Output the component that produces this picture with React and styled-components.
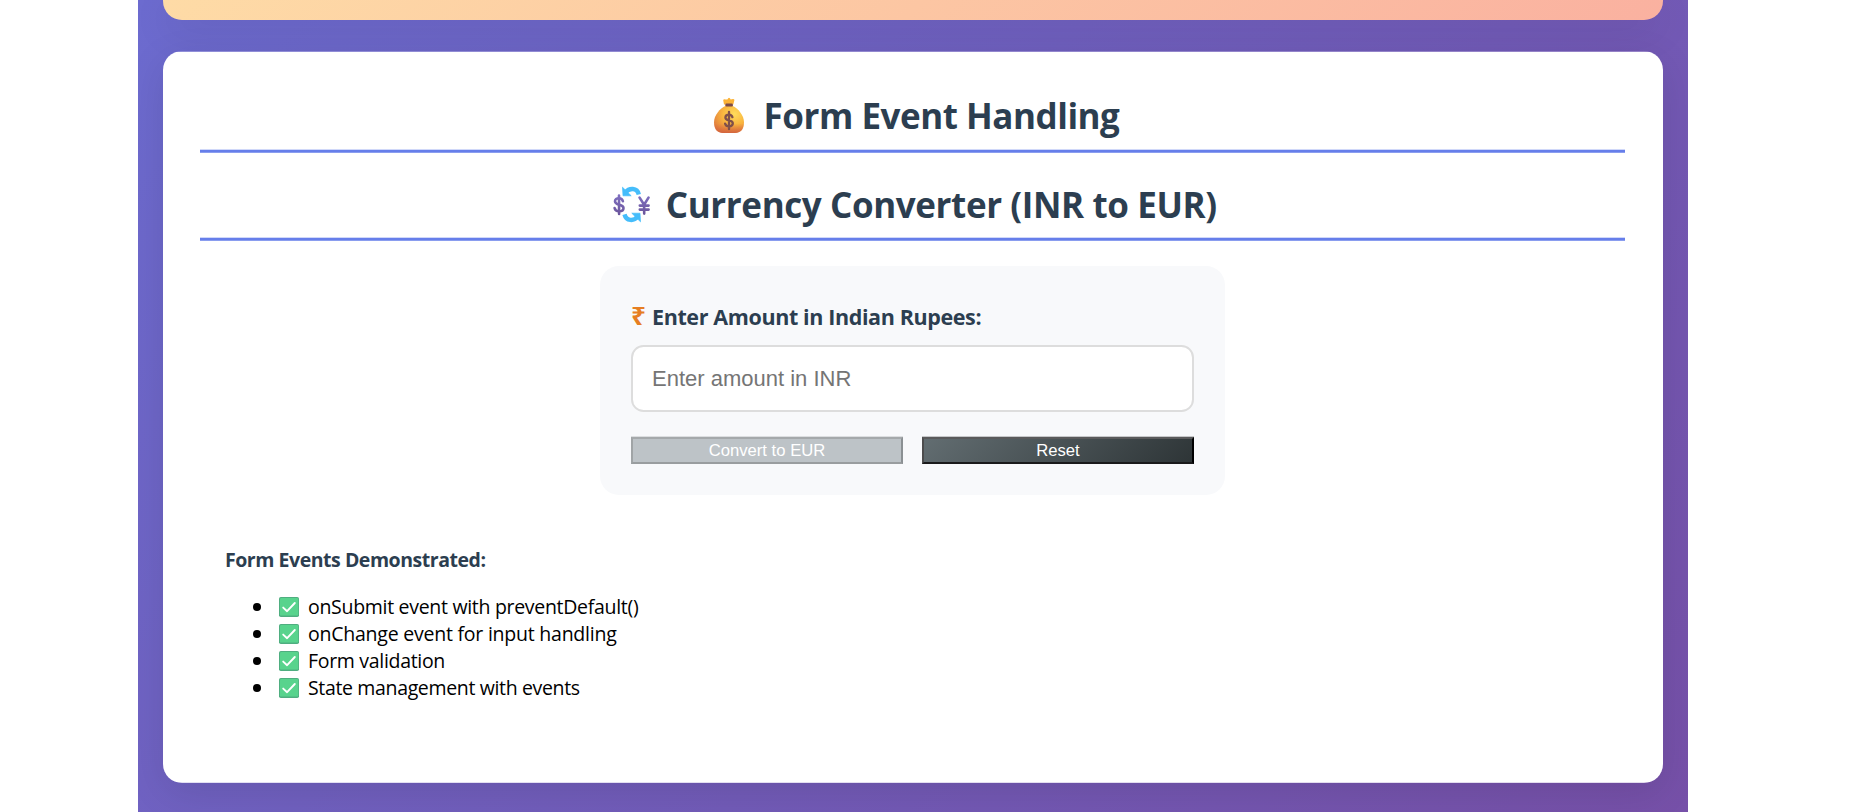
import React, { useState } from "react";
import styled, { createGlobalStyle } from "styled-components";

const GlobalStyle = createGlobalStyle`
  * { box-sizing: border-box; }
  body {
    margin: 0;
    background: #fff;
    overflow: hidden;
    font-family: "Open Sans", "Noto Sans", sans-serif;
  }
`;

const Page = styled.main`
  width: 1550px;
  height: 812px;
  margin-left: 138px;
  padding: 0 25px;
  overflow: hidden;
  display: flex;
  flex-direction: column;
  background: linear-gradient(135deg, #6c6bcf, #7650a8);
`;

const PreviousCard = styled.div`
  flex: none;
  height: 20px;
  border-radius: 0 0 19px 19px;
  background: linear-gradient(135deg, #fedba6, #fab1a0);
  box-shadow: 0 10px 38px rgba(0, 0, 0, 0.1);
`;

const Card = styled.section`
  flex: none;
  height: 732px;
  margin-top: 31px;
  padding: 37px 38px 0 37px;
  border-radius: 19px;
  background: linear-gradient(
    rgba(255, 255, 255, 0.25) 0 1px,
    #fff 1px 731px,
    rgba(255, 255, 255, 0.8) 731px
  );
  box-shadow: 0 10px 38px rgba(0, 0, 0, 0.1);
`;

const Heading = styled.h2`
  height: ${(p) => p.$height}px;
  margin: 0 0 ${(p) => p.$gap}px;
  padding-left: ${(p) => p.$indent}px;
  display: flex;
  justify-content: center;
  align-items: flex-start;
  gap: ${(p) => p.$iconGap}px;
  color: #2c3e50;
  font-size: 35px;
  font-weight: 700;
  line-height: 55px;
  letter-spacing: ${(p) => p.$track}px;
  white-space: nowrap;
  background: linear-gradient(#d0d8f9 0 1px, #667eea 1px 3px, #8a9def 3px 4px)
    bottom / 100% 4px no-repeat;

  svg {
    flex: none;
    margin-top: 9px;
  }
`;

const Form = styled.form`
  width: 625px;
  height: 229px;
  margin: 0 auto 51px;
  padding: 31px 31px 0;
  border-radius: 19px;
  background: #f8f9fb;
`;

const Label = styled.label`
  display: flex;
  gap: 7px;
  height: 48px;
  padding: 5px 0 0;
  color: #2c3e50;
  font-size: 21.5px;
  font-weight: 700;
  line-height: 30px;
  letter-spacing: -0.38px;
  white-space: nowrap;
`;

const Rupee = styled.span`
  width: 14px;
  color: #e67e22;
  font-size: 26px;
  line-height: 26px;
`;

const AmountInput = styled.input`
  display: block;
  width: 100%;
  height: 67px;
  padding: 0 19px;
  border: 2px solid #ddd;
  border-radius: 12.5px;
  background: #fff;
  outline: none;
  font-family: "Liberation Sans", sans-serif;
  font-size: 22px;

  &::placeholder { color: #757575; }
`;

const Buttons = styled.div`
  display: flex;
  gap: 19px;
  margin-top: 25px;
`;

const Button = styled.button`
  flex: 1;
  height: 27px;
  padding: 0;
  border: 2px solid;
  border-color: ${(p) => p.$edge};
  border-radius: 0;
  color: #fff;
  background: ${(p) => p.$fill};
  background-origin: border-box;
  box-shadow: 0 -1px 0 ${(p) => p.$rim};
  font-family: "Liberation Sans", sans-serif;
  font-size: 16.67px;
  line-height: 23px;
`;

const Notes = styled.div`
  padding-left: 25px;
`;

const NotesTitle = styled.h4`
  margin: 0 0 20px;
  color: #2c3e50;
  font-size: 19.5px;
  line-height: 27px;
  letter-spacing: -0.46px;
`;

const List = styled.ul`
  margin: 0;
  padding: 0 0 0 28px;
  list-style: none;
`;

const Item = styled.li`
  display: flex;
  align-items: center;
  height: 27px;
  color: #000;
  font-size: 19.5px;
  line-height: 27px;
  letter-spacing: ${(p) => p.$track}px;

  &::before {
    content: "";
    width: 8px;
    height: 8px;
    margin-right: 18px;
    border-radius: 50%;
    background: #000;
  }

  svg { margin-right: 9px; }
`;

const MoneyBag = () => (
  <svg width="32" height="36" viewBox="0 0 32 36" aria-hidden="true">
    <defs>
      <radialGradient id="bag" cx="0.68" cy="0.3" r="0.8">
        <stop offset="0" stopColor="#ffdc5c" />
        <stop offset="0.5" stopColor="#f9b53f" />
        <stop offset="1" stopColor="#e07a3d" />
      </radialGradient>
      <linearGradient id="bagBase" x1="0" y1="0" x2="0" y2="1">
        <stop offset="0.65" stopColor="#dc6a3c" stopOpacity="0" />
        <stop offset="1" stopColor="#d0603e" stopOpacity="0.85" />
      </linearGradient>
    </defs>
    <path d="M11 7.5 10.2 3.2Q10.3 1.9 12.6 2.4L14.4 2.6Q16 -.9 17.7 2.6L20 2Q21.8 2 21.3 3.5L20.3 7.5Z" fill="#fbb236" />
    <path d="M12.5 9h7.2C25 11.5 31 18 31 25.5 31 32.5 27 36 22 36H10C5 36 1 32.5 1 25.5 1 18 7 11.5 12.5 9Z" fill="url(#bag)" />
    <path d="M12.5 9h7.2C25 11.5 31 18 31 25.5 31 32.5 27 36 22 36H10C5 36 1 32.5 1 25.5 1 18 7 11.5 12.5 9Z" fill="url(#bagBase)" />
    <rect x="12.3" y="6.6" width="7.6" height="2.8" rx="1.2" fill="#7b4a48" />
    <path d="M19.4 20.2C19 18.4 17.8 17.6 16 17.6c-2.3 0-3.6 1.1-3.6 2.8 0 4.2 7.4 1.7 7.4 5.9 0 1.8-1.5 3-3.8 3-2.1 0-3.4-.9-3.9-2.7M16 14.8V32.2" fill="none" stroke="#80504a" strokeWidth="2.3" strokeLinecap="round" />
  </svg>
);

const Exchange = () => (
  <svg width="37" height="37" viewBox="0 0 37 37" aria-hidden="true">
    <defs>
      <linearGradient id="coin" gradientUnits="userSpaceOnUse" x1="0" y1="9" x2="0" y2="28">
        <stop offset="0" stopColor="#7e6fc0" />
        <stop offset="1" stopColor="#6c569d" />
      </linearGradient>
    </defs>
    <g fill="none" stroke="#45bdfb" strokeWidth="4.4">
      <path d="M12.5 6.5C16 1.6 24.2 1.4 25.8 8.4" />
      <path d="M11.5 28.4C13.2 35.3 21 35.4 24.5 30.5" />
    </g>
    <path d="M9.5 1.2 10 9.8H18.2ZM27.5 35.8 27 27.2H18.8Z" fill="#45bdfb" stroke="#45bdfb" strokeWidth=".7" strokeLinejoin="round" />
    <g fill="none" stroke="url(#coin)" strokeWidth="2.6" strokeLinecap="round">
      <path d="M9.9 15.2C9.4 13.1 8 12.2 6 12.2c-2.5 0-4 1.2-4 3.1 0 4.7 8.5 2.1 8.5 6.7 0 2.1-1.7 3.3-4.4 3.3-2.5 0-4-1-4.5-3.3" />
      <path d="M6 9.6 6.1 28" />
      <path d="M26.6 11.6 31.1 18.8 35.5 11.6M31.1 18.8 31.2 27.6M26.8 19.6H35.6M26.8 23.6H35.6" />
    </g>
  </svg>
);

const Check = () => (
  <svg width="20" height="20" viewBox="0 0 20 20" aria-hidden="true">
    <rect width="20" height="20" rx="1.8" fill="#4fae80" />
    <rect x="1" y="1" width="18.3" height="17.6" rx="1.2" fill="#58d38d" />
    <path d="M4.2 10.6 8.1 14.2 15.8 6" fill="none" stroke="#fff" strokeWidth="1.9" strokeLinecap="round" strokeLinejoin="round" />
  </svg>
);

const notes = [
  { text: "onSubmit event with preventDefault()", track: -0.3 },
  { text: "onChange event for input handling", track: -0.23 },
  { text: "Form validation", track: -0.31 },
  { text: "State management with events", track: -0.35 },
];

export default function App() {
  const [amount, setAmount] = useState("");

  return (
    <>
      <GlobalStyle />
      <Page>
        <PreviousCard />
        <Card>
          <Heading $height={65} $gap={24} $iconGap={18.5} $indent={7.5} $track={-0.48}>
            <MoneyBag />
            <span>Form Event Handling</span>
          </Heading>
          <Heading $height={64} $gap={25} $iconGap={15.5} $indent={5} $track={-0.4}>
            <Exchange />
            <span>Currency Converter (INR to EUR)</span>
          </Heading>
          <Form onSubmit={(e) => e.preventDefault()}>
            <Label htmlFor="amount">
              <Rupee>₹</Rupee>
              <span>Enter Amount in Indian Rupees:</span>
            </Label>
            <AmountInput
              id="amount"
              placeholder="Enter amount in INR"
              value={amount}
              onChange={(e) => setAmount(e.target.value)}
            />
            <Buttons>
              <Button
                type="submit"
                $fill="#bdc3c7"
                $edge="#a5a9ab #8b9093 #999d9f #a0a4a6"
                $rim="#dcdee0"
              >
                Convert to EUR
              </Button>
              <Button
                type="button"
                $fill="linear-gradient(135deg, #636e72, #2d3436)"
                $edge="#5a5a5b #000 #1a1a1b #4c4c4d"
                $rim="#c6c7c9"
                onClick={() => setAmount("")}
              >
                Reset
              </Button>
            </Buttons>
          </Form>
          <Notes>
            <NotesTitle>Form Events Demonstrated:</NotesTitle>
            <List>
              {notes.map((note) => (
                <Item key={note.text} $track={note.track}>
                  <Check />
                  {note.text}
                </Item>
              ))}
            </List>
          </Notes>
        </Card>
      </Page>
    </>
  );
}
